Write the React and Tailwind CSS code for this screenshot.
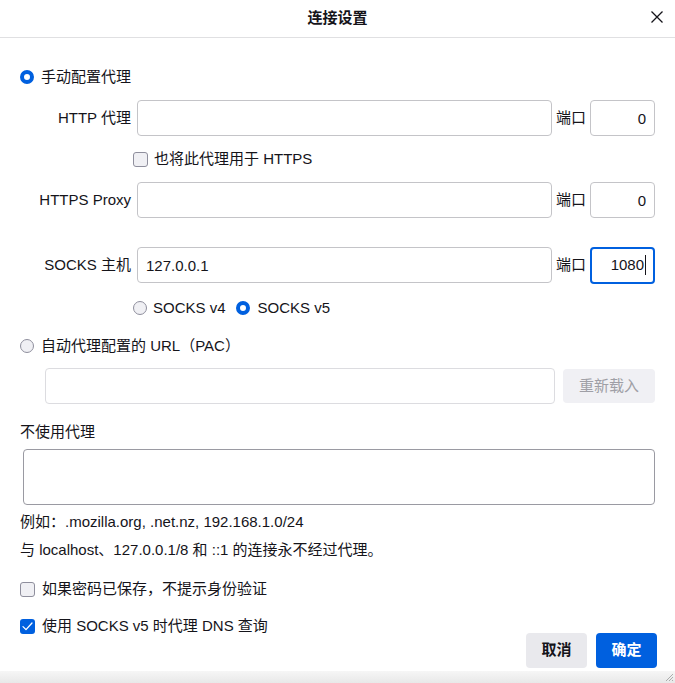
import { useState } from 'react';

const font = { fontFamily: '"Liberation Sans", "Noto Sans CJK SC", sans-serif' };

function Radio({ checked }) {
  return checked ? (
    <span className="block w-[14px] h-[14px] rounded-full border-[4px] border-[#0060df] bg-white shrink-0" />
  ) : (
    <span className="block w-[14px] h-[14px] rounded-full border border-[#8f8f9d] bg-[#f0f0f4] shrink-0" />
  );
}

function Checkbox({ checked }) {
  return checked ? (
    <span className="w-[15px] h-[15px] rounded-[3px] bg-[#0060df] flex items-center justify-center shrink-0">
      <svg width="11" height="9" viewBox="0 0 11 9" fill="none">
        <path d="M1 4.6 L4 7.6 L10 1" stroke="white" strokeWidth="1.3" strokeLinecap="round" strokeLinejoin="round" />
      </svg>
    </span>
  ) : (
    <span className="w-[15px] h-[15px] rounded-[3px] border border-[#8f8f9d] bg-[#f0f0f4] shrink-0" />
  );
}

function TextField({ value = '', align = 'left', className = '' }) {
  return (
    <input
      readOnly
      value={value}
      className={`h-[36px] rounded-[4px] border border-[#c4c4c8] bg-white px-[8px] text-[15px] text-[#15141a] outline-none ${align === 'right' ? 'text-right' : ''} ${className}`}
      style={font}
    />
  );
}

function ProxyRow({ label, host, port, focused, className = '' }) {
  return (
    <div className={`flex items-center h-[36px] ${className}`}>
      <div className="w-[111px] text-right whitespace-nowrap">{label}</div>
      <TextField value={host} className="ml-[6px] w-[415px] shrink-0" />
      <div className="ml-[4px] w-[31px] whitespace-nowrap">端口</div>
      {focused ? (
        <div className="ml-[3px] w-[65px] h-[37px] rounded-[4px] border-2 border-[#0060df] flex items-center justify-end pr-[7px] shrink-0">
          <span>{port}</span>
          <span className="inline-block w-px h-[20px] bg-[#15141a] ml-px" />
        </div>
      ) : (
        <TextField value={port} align="right" className="ml-[3px] w-[65px] shrink-0" />
      )}
    </div>
  );
}

export default function App() {
  const [mode] = useState('manual');

  return (
    <div className="relative w-[675px] h-[683px] bg-white text-[15px] text-[#15141a] overflow-hidden" style={font}>
      {/* Header */}
      <div className="relative h-[38px] border-b border-[#e0e0e2] flex items-center justify-center">
        <span className="font-bold text-[15px]">连接设置</span>
        <svg className="absolute right-[11px] top-[10px]" width="14" height="14" viewBox="0 0 14 14">
          <path d="M1.5 1.5 L12.5 12.5 M12.5 1.5 L1.5 12.5" stroke="#15141a" strokeWidth="1.3" />
        </svg>
      </div>

      <div className="px-[20px]">
        {/* Manual proxy */}
        <div className="flex items-center gap-[7px] h-[20px] mt-[29px]">
          <Radio checked={mode === 'manual'} />
          <span>手动配置代理</span>
        </div>

        <div className="-ml-[20px] -mr-[20px] pl-[20px]">
          <ProxyRow label="HTTP 代理" host="" port="0" className="mt-[13px]" />

          <div className="flex items-center gap-[6px] h-[18px] mt-[14px] pl-[113px]">
            <Checkbox checked={false} />
            <span>也将此代理用于 HTTPS</span>
          </div>

          <ProxyRow label="HTTPS Proxy" host="" port="0" className="mt-[14px]" />

          <ProxyRow label="SOCKS 主机" host="127.0.0.1" port="1080" focused className="mt-[29px]" />

          <div className="flex items-center h-[18px] mt-[16px] pl-[113px]">
            <Radio checked={false} />
            <span className="ml-[6px]">SOCKS v4</span>
            <span className="ml-[10px]"><Radio checked /></span>
            <span className="ml-[8px]">SOCKS v5</span>
          </div>
        </div>

        {/* PAC */}
        <div className="flex items-center gap-[7px] h-[18px] mt-[20px]">
          <Radio checked={false} />
          <span>自动代理配置的 URL（PAC）</span>
        </div>

        <div className="flex items-center mt-[13px] pl-[25px]">
          <TextField value="" className="w-[510px] border-[#dcdce0]" />
          <button className="ml-[8px] w-[92px] h-[34px] rounded-[4px] bg-[#f0f0f4] text-[#9f9fa6] text-[15px]" style={font}>
            重新载入
          </button>
        </div>

        {/* No proxy */}
        <div className="h-[18px] mt-[19px] flex items-center">不使用代理</div>
        <textarea
          readOnly
          className="block mt-[8px] ml-[3px] w-[632px] h-[56px] rounded-[4px] border border-[#9a9aa2] resize-none outline-none"
        />
        <div className="h-[18px] mt-[8px] flex items-center">例如：.mozilla.org, .net.nz, 192.168.1.0/24</div>
        <div className="h-[18px] mt-[10px] flex items-center">与 localhost、127.0.0.1/8 和 ::1 的连接永不经过代理。</div>

        <div className="flex items-center gap-[7px] h-[18px] mt-[21px]">
          <Checkbox checked={false} />
          <span>如果密码已保存，不提示身份验证</span>
        </div>
        <div className="flex items-center gap-[7px] h-[18px] mt-[19px]">
          <Checkbox checked />
          <span>使用 SOCKS v5 时代理 DNS 查询</span>
        </div>

        {/* Footer */}
        <div className="flex justify-end gap-[9px] -mt-[2px]">
          <button className="w-[61px] h-[35px] rounded-[4px] bg-[#e9e9ed] font-bold text-[15px] text-[#15141a]" style={font}>
            取消
          </button>
          <button className="w-[61px] h-[35px] rounded-[4px] bg-[#0060df] font-bold text-[15px] text-white -mr-[2px]" style={font}>
            确定
          </button>
        </div>
      </div>

      {/* Bottom window edge */}
      <div className="absolute left-0 right-0 bottom-0 h-[12px] bg-gradient-to-b from-[#f6f6f6] to-[#e8e8e8]" />
      <svg className="absolute right-[1px] bottom-[1px]" width="10" height="10" viewBox="0 0 10 10">
        <path d="M9 2 L2 9 M9 5 L5 9 M9 8 L8 9" stroke="#9a9a9a" strokeWidth="0.8" />
      </svg>
    </div>
  );
}
